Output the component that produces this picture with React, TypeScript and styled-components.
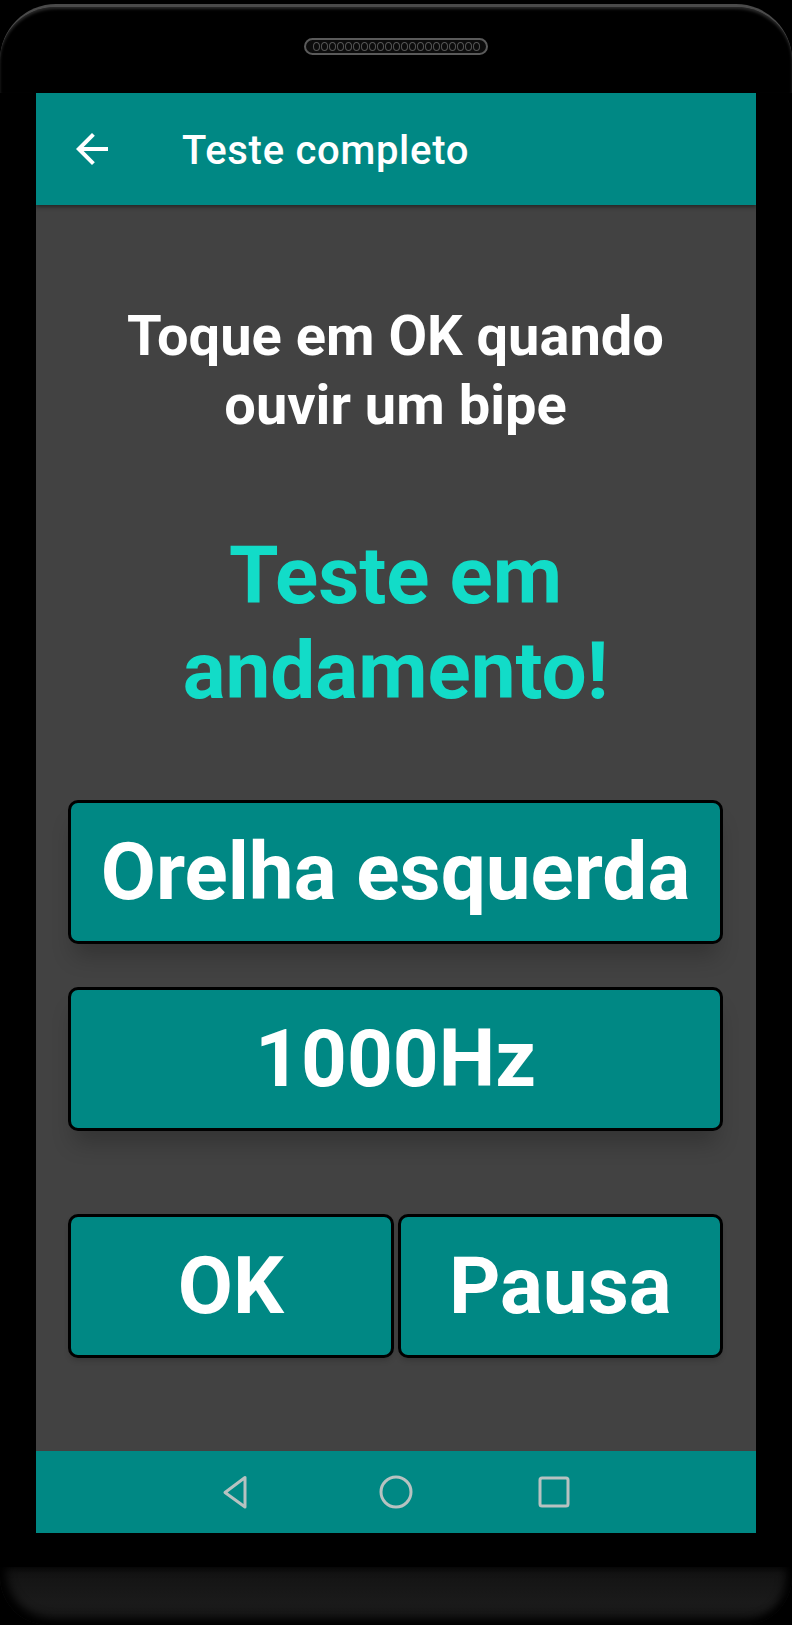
import React from 'react';
import styled, { createGlobalStyle } from 'styled-components';

const GlobalStyle = createGlobalStyle`
  html, body {
    margin: 0;
    padding: 0;
    background: #000;
  }
  body {
    font-family: 'Roboto', 'Noto Sans', sans-serif;
  }
`;

const Device = styled.div`
  width: 792px;
  height: 1625px;
  background: #000;
  display: flex;
  flex-direction: column;
  overflow: hidden;
`;

const TopBezel = styled.div`
  height: 89px;
  margin-top: 4px;
  border-radius: 56px 56px 0 0;
  border-top: 3px solid #4a4a4a;
  box-shadow: inset 0 2px 3px #2a2a2a;
  display: flex;
  justify-content: center;
  box-sizing: border-box;
  padding-top: 31px;
`;

const Speaker = styled.div`
  width: 184px;
  height: 17px;
  box-sizing: border-box;
  border: 2px solid #5a5a5a;
  border-radius: 9px;
  background: #0c0c0c;
  display: flex;
  align-items: center;
  justify-content: center;
  gap: 1px;
`;

const SpeakerDot = styled.span`
  width: 7px;
  height: 9px;
  box-sizing: border-box;
  border: 1px solid #555;
  border-radius: 50%;
`;

const Screen = styled.div`
  margin: 0 36px;
  height: 1440px;
  display: flex;
  flex-direction: column;
  background: #424242;
`;

const AppBar = styled.div`
  height: 112px;
  flex-shrink: 0;
  background: #008884;
  display: flex;
  align-items: center;
  padding-left: 32px;
  box-shadow: 0 2px 4px rgba(0, 0, 0, 0.45);
  position: relative;
  z-index: 1;
`;

const BackIcon = styled.svg`
  width: 48px;
  height: 48px;
  fill: #fff;
  flex-shrink: 0;
`;

const AppTitle = styled.div`
  margin-left: 66px;
  margin-top: 2px;
  color: #fff;
  font-size: 40px;
  font-weight: 500;
  letter-spacing: 0.7px;
`;

const Content = styled.div`
  flex: 1;
  display: flex;
  flex-direction: column;
  align-items: center;
  padding: 97px 33px 0 32px;
`;

const Instruction = styled.div`
  color: #fff;
  font-size: 56px;
  line-height: 69px;
  font-weight: 700;
  text-align: center;
`;

const Status = styled.div`
  margin-top: 89px;
  color: #12dcc8;
  font-size: 80px;
  line-height: 95px;
  font-weight: 700;
  text-align: center;
`;

const Tile = styled.div<{ $top: number }>`
  margin-top: ${(p) => p.$top}px;
  width: 100%;
  height: 144px;
  box-sizing: border-box;
  background: #008884;
  border: 3px solid #000;
  border-radius: 10px;
  display: flex;
  align-items: center;
  justify-content: center;
  color: #fff;
  font-size: 80px;
  font-weight: 700;
  box-shadow: 0 18px 22px -6px rgba(0, 0, 0, 0.22);
`;

const Row = styled.div`
  margin-top: 83px;
  width: 100%;
  display: grid;
  grid-template-columns: 1fr 1fr;
  gap: 4px;
`;

const ActionButton = styled(Tile)`
  margin-top: 0;
  box-shadow: 0 4px 6px -2px rgba(0, 0, 0, 0.2);
`;

const NavBar = styled.div`
  height: 82px;
  flex-shrink: 0;
  background: #008884;
  display: flex;
  align-items: center;
  justify-content: center;
  gap: 110px;
`;

const NavIcon = styled.svg`
  width: 48px;
  height: 48px;
  fill: none;
  stroke: #b7c2c1;
  stroke-width: 3;
  stroke-linejoin: round;
`;

const Gap = styled.div`
  height: 34px;
  flex-shrink: 0;
`;

const Chin = styled.div`
  flex: 1;
  background: linear-gradient(#121212, #1a1a1a 60%, #161616);
  border-radius: 0 0 48px 48px;
  box-shadow: inset 6px -6px 10px #000, inset -6px 0 10px #000;
`;

export default function App() {
  return (
    <>
      <GlobalStyle />
      <Device>
        <TopBezel>
          <Speaker>
            {Array.from({ length: 21 }).map((_, i) => (
              <SpeakerDot key={i} />
            ))}
          </Speaker>
        </TopBezel>
        <Screen>
          <AppBar>
            <BackIcon viewBox="0 0 24 24">
              <path d="M20 11H7.83l5.59-5.59L12 4l-8 8 8 8 1.41-1.41L7.83 13H20v-2z" />
            </BackIcon>
            <AppTitle>Teste completo</AppTitle>
          </AppBar>
          <Content>
            <Instruction>
              Toque em OK quando
              <br />
              ouvir um bipe
            </Instruction>
            <Status>
              Teste em
              <br />
              andamento!
            </Status>
            <Tile $top={81}>Orelha esquerda</Tile>
            <Tile $top={43}>1000Hz</Tile>
            <Row>
              <ActionButton $top={0}>OK</ActionButton>
              <ActionButton $top={0}>Pausa</ActionButton>
            </Row>
          </Content>
          <NavBar>
            <NavIcon viewBox="0 0 48 48">
              <path d="M31 9.5 L31 39 L11 24.5 Z" />
            </NavIcon>
            <NavIcon viewBox="0 0 48 48">
              <circle cx="24" cy="24" r="15" />
            </NavIcon>
            <NavIcon viewBox="0 0 48 48">
              <rect x="10" y="10" width="28" height="28" rx="2" />
            </NavIcon>
          </NavBar>
        </Screen>
        <Gap />
        <Chin />
      </Device>
    </>
  );
}
